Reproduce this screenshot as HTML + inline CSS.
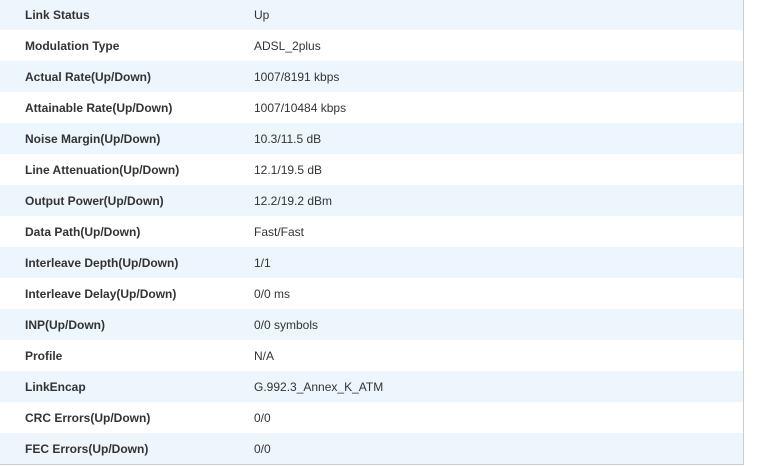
<!DOCTYPE html>
<html><head><style>
body{margin:0;width:761px;height:467px;background:#fff;overflow:hidden;font-family:"Liberation Sans",Arial,sans-serif;font-size:12px;color:#333}
.t{position:absolute;left:0;top:-1px;width:743px;border-right:1px solid #ccc;border-bottom:1px solid #ccc}
.r{height:31px;line-height:33px;position:relative}
.r:nth-child(odd){background:#edf5fd}
.l{position:absolute;left:25px;font-weight:bold}
.v{position:absolute;left:254px}
</style></head><body>
<div class="t">
<div class="r"><span class="l">Link Status</span><span class="v">Up</span></div>
<div class="r"><span class="l">Modulation Type</span><span class="v">ADSL_2plus</span></div>
<div class="r"><span class="l">Actual Rate(Up/Down)</span><span class="v">1007/8191 kbps</span></div>
<div class="r"><span class="l">Attainable Rate(Up/Down)</span><span class="v">1007/10484 kbps</span></div>
<div class="r"><span class="l">Noise Margin(Up/Down)</span><span class="v">10.3/11.5 dB</span></div>
<div class="r"><span class="l">Line Attenuation(Up/Down)</span><span class="v">12.1/19.5 dB</span></div>
<div class="r"><span class="l">Output Power(Up/Down)</span><span class="v">12.2/19.2 dBm</span></div>
<div class="r"><span class="l">Data Path(Up/Down)</span><span class="v">Fast/Fast</span></div>
<div class="r"><span class="l">Interleave Depth(Up/Down)</span><span class="v">1/1</span></div>
<div class="r"><span class="l">Interleave Delay(Up/Down)</span><span class="v">0/0 ms</span></div>
<div class="r"><span class="l">INP(Up/Down)</span><span class="v">0/0 symbols</span></div>
<div class="r"><span class="l">Profile</span><span class="v">N/A</span></div>
<div class="r"><span class="l">LinkEncap</span><span class="v">G.992.3_Annex_K_ATM</span></div>
<div class="r"><span class="l">CRC Errors(Up/Down)</span><span class="v">0/0</span></div>
<div class="r"><span class="l">FEC Errors(Up/Down)</span><span class="v">0/0</span></div>
</div>
</body></html>
